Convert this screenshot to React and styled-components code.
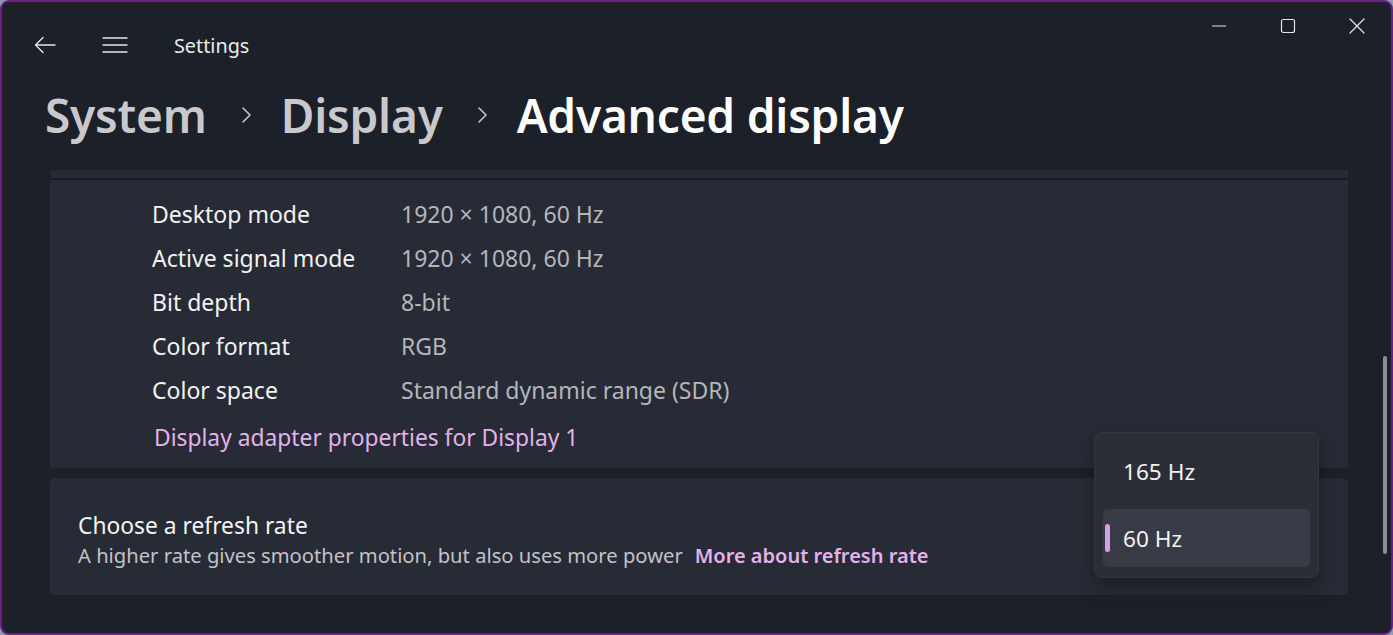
import React from "react";
import styled, { createGlobalStyle } from "styled-components";

const GlobalStyle = createGlobalStyle`
  html, body {
    margin: 0;
    padding: 0;
    background: #8e9cab;
    font-family: "Noto Sans", "Open Sans", sans-serif;
  }
  * { box-sizing: border-box; }
`;

const rows = [
  { label: "Desktop mode", value: "1920 × 1080, 60 Hz" },
  { label: "Active signal mode", value: "1920 × 1080, 60 Hz" },
  { label: "Bit depth", value: "8-bit" },
  { label: "Color format", value: "RGB" },
  { label: "Color space", value: "Standard dynamic range (SDR)" },
];

const ChevronIcon = () => (
  <svg width="12" height="18" viewBox="0 0 12 18" fill="none" stroke="#c4c4c8" strokeWidth="1.6" strokeLinecap="round" strokeLinejoin="round">
    <path d="M3 2L10 9L3 16" />
  </svg>
);

export default function App() {
  return (
    <>
      <GlobalStyle />
      <Window>
        <TitleBar>
          <IconButton aria-label="Back">
            <svg width="22" height="18" viewBox="0 0 22 18" fill="none" stroke="#e6e6e6" strokeWidth="1.4" strokeLinecap="round" strokeLinejoin="round">
              <path d="M21 9H2M9 1.5L1.5 9L9 16.5" />
            </svg>
          </IconButton>
          <IconButton aria-label="Menu">
            <svg width="26" height="18" viewBox="0 0 26 18" fill="none" stroke="#e6e6e6" strokeWidth="1.4" strokeLinecap="round">
              <path d="M1 2H25M1 9H25M1 16H25" />
            </svg>
          </IconButton>
          <AppTitle>Settings</AppTitle>
          <Controls>
            <ControlButton aria-label="Minimize">
              <svg width="16" height="16" viewBox="0 0 16 16" stroke="#e6e6e6" strokeWidth="1.2">
                <path d="M1 8H15" />
              </svg>
            </ControlButton>
            <ControlButton aria-label="Maximize">
              <svg width="16" height="16" viewBox="0 0 16 16" fill="none" stroke="#e6e6e6" strokeWidth="1.2">
                <rect x="1.5" y="1.5" width="13" height="13" rx="2" />
              </svg>
            </ControlButton>
            <ControlButton aria-label="Close">
              <svg width="16" height="16" viewBox="0 0 16 16" stroke="#e6e6e6" strokeWidth="1.2" strokeLinecap="round">
                <path d="M1 1L15 15M15 1L1 15" />
              </svg>
            </ControlButton>
          </Controls>
        </TitleBar>

        <Breadcrumb>
          <Crumb>System</Crumb>
          <Chevron><ChevronIcon /></Chevron>
          <Crumb>Display</Crumb>
          <Chevron><ChevronIcon /></Chevron>
          <Crumb $current>Advanced display</Crumb>
        </Breadcrumb>

        <Content>
          <TopStrip />
          <InfoCard>
            {rows.map((r) => (
              <InfoRow key={r.label}>
                <InfoLabel>{r.label}</InfoLabel>
                <InfoValue>{r.value}</InfoValue>
              </InfoRow>
            ))}
            <AdapterLink href="#">Display adapter properties for Display 1</AdapterLink>
          </InfoCard>

          <RateCard>
            <RateText>
              <RateTitle>Choose a refresh rate</RateTitle>
              <RateDesc>
                A higher rate gives smoother motion, but also uses more power
                <MoreLink href="#">More about refresh rate</MoreLink>
              </RateDesc>
            </RateText>
          </RateCard>

          <Dropdown>
            <Option>165 Hz</Option>
            <Option $selected>60 Hz</Option>
          </Dropdown>
        </Content>

        <Scrollbar />
      </Window>
    </>
  );
}

const Window = styled.div`
  position: relative;
  width: 1393px;
  height: 635px;
  background: #1c2028;
  border: 2px solid #6c1c8e;
  border-radius: 9px;
  overflow: hidden;
  display: flex;
  flex-direction: column;
  color: #ffffff;
`;

const TitleBar = styled.div`
  height: 90px;
  display: flex;
  align-items: center;
  padding: 0 0 0 28px;
  margin-top: -2px;
`;

const IconButton = styled.button`
  background: none;
  border: none;
  padding: 0;
  width: 30px;
  height: 30px;
  display: flex;
  align-items: center;
  justify-content: center;
  margin-right: 40px;
  cursor: pointer;
`;

const AppTitle = styled.span`
  font-size: 19.8px;
  color: #ececec;
  margin-left: 4px;
`;

const Controls = styled.div`
  margin-left: auto;
  display: flex;
  align-self: flex-start;
  padding-top: 18px;
  padding-right: 0;
`;

const ControlButton = styled.button`
  background: none;
  border: none;
  width: 69px;
  height: 16px;
  display: flex;
  align-items: center;
  justify-content: center;
  padding: 0;
`;

const Breadcrumb = styled.div`
  display: flex;
  align-items: center;
  padding-left: 43px;
  height: 62px;
  margin-top: -6px;
`;

const Crumb = styled.span`
  font-size: 46px;
  font-weight: 600;
  color: ${(p) => (p.$current ? "#ffffff" : "#c9c9cd")};
  letter-spacing: -0.2px;
`;

const Chevron = styled.span`
  display: flex;
  align-items: center;
  margin: 0 29px 0 33px;
`;

const Content = styled.div`
  position: relative;
  padding: 24px 43px 0 48px;
  display: flex;
  flex-direction: column;
`;

const TopStrip = styled.div`
  height: 10px;
  background: #262a33;
  border-bottom: 2px solid #1a1d24;
`;

const InfoCard = styled.div`
  background: #272b35;
  padding: 12px 0 12px 102px;
  border-radius: 0 0 4px 4px;
  display: flex;
  flex-direction: column;
`;

const InfoRow = styled.div`
  display: flex;
  height: 44px;
  align-items: center;
`;

const InfoLabel = styled.span`
  width: 249px;
  font-size: 23px;
  color: #f2f2f2;
`;

const InfoValue = styled.span`
  font-size: 23px;
  color: #b5b6bb;
`;

const AdapterLink = styled.a`
  font-size: 22.8px;
  color: #e3b2ea;
  text-decoration: none;
  margin: 6px 0 0 2px;
  height: 38px;
  display: flex;
  align-items: center;
`;

const RateCard = styled.div`
  margin-top: 10px;
  height: 117px;
  background: #272b35;
  border-radius: 5px;
  display: flex;
  align-items: center;
  padding: 0 28px;
`;

const RateText = styled.div`
  display: flex;
  flex-direction: column;
  padding-top: 7px;
`;

const RateTitle = styled.span`
  font-size: 22.8px;
  color: #f4f4f4;
  line-height: 30px;
`;

const RateDesc = styled.span`
  font-size: 20.2px;
  color: #c2c3c8;
  line-height: 28px;
`;

const MoreLink = styled.a`
  margin-left: 12px;
  color: #e3b2ea;
  font-weight: 600;
  font-size: 20px;
  text-decoration: none;
`;

const Dropdown = styled.div`
  position: absolute;
  top: 286px;
  left: 1092px;
  width: 225px;
  height: 146px;
  background: #2b2d37;
  border: 1px solid #34363f;
  border-radius: 8px;
  box-shadow: 0 8px 20px rgba(0, 0, 0, 0.35);
  padding: 9px 8px;
  display: flex;
  flex-direction: column;
  gap: 9px;
`;

const Option = styled.div`
  position: relative;
  height: 58px;
  display: flex;
  align-items: center;
  padding-left: 20px;
  font-size: 22.6px;
  color: #f2f2f2;
  border-radius: 5px;
  background: ${(p) => (p.$selected ? "#383a45" : "transparent")};
  &::before {
    content: "";
    display: ${(p) => (p.$selected ? "block" : "none")};
    position: absolute;
    left: 2px;
    top: 15px;
    width: 5px;
    height: 28px;
    border-radius: 3px;
    background: #d79fe0;
  }
`;

const Scrollbar = styled.div`
  position: absolute;
  right: 4px;
  top: 354px;
  width: 4px;
  height: 198px;
  border-radius: 2px;
  background: #8b8d93;
`;
